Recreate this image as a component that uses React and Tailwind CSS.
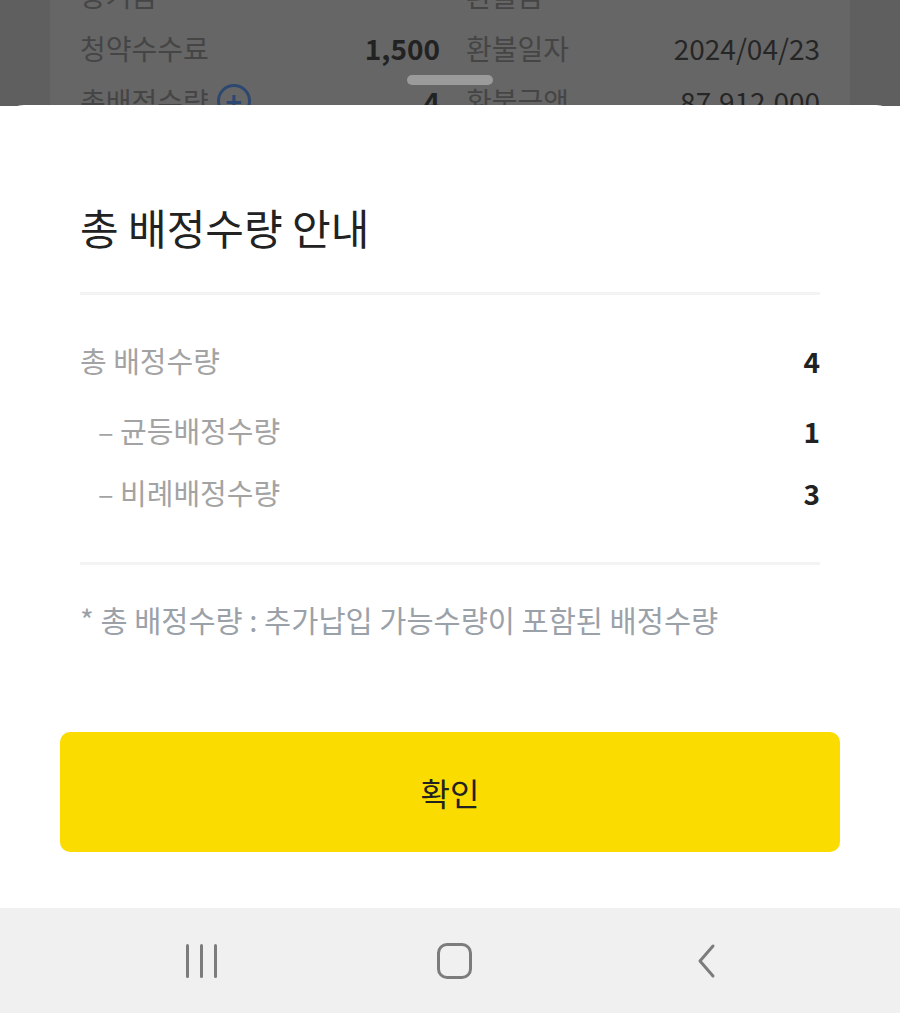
import React from 'react';

const FONT = { fontFamily: '"Noto Sans CJK KR", "Noto Sans", sans-serif' };

const BgRow = ({ label, value, label2, value2, plus }) => (
    <div className="flex items-center h-[53px]">
        <div className="flex items-center w-[360px] justify-between">
            <span className="flex items-center gap-2 text-[28px] text-[#454545]">
                {label}
                {plus && (
                    <span className="w-[34px] h-[34px] rounded-full border-[3px] border-[#2c4870] flex items-center justify-center text-[#2c4870] text-[28px] leading-none font-bold">+</span>
                )}
            </span>
            <span className="text-[28px] font-bold text-[#222]">{value}</span>
        </div>
        <span className="ml-[26px] text-[28px] text-[#454545]">{label2}</span>
        <span className="ml-auto text-[28px] text-[#262626]">{value2}</span>
    </div>
);

const InfoRow = ({ label, value, sub }) => (
    <div className="flex items-center justify-between h-[40px]">
        <span className={`text-[29px] text-[#a3a3a3] ${sub ? 'pl-[18px]' : ''}`}>{label}</span>
        <span className="text-[28px] font-bold text-[#222]">{value}</span>
    </div>
);

export default function App() {
    return (
        <div className="w-[900px] h-[1013px] flex flex-col bg-white overflow-hidden" style={FONT}>
            {/* dimmed page behind the sheet */}
            <div className="relative h-[106px] shrink-0 bg-[#5f5f5f] overflow-hidden">
                <div className="mx-[50px] h-[160px] bg-[#666666] px-[30px] -mt-[32px]">
                    <BgRow label="증거금" value="" label2="환불금" value2="" />
                    <BgRow label="청약수수료" value="1,500" label2="환불일자" value2="2024/04/23" />
                    <BgRow label="총배정수량" value="4" label2="환불금액" value2="87,912,000" plus />
                </div>
                <div className="absolute left-[407px] top-[75px] w-[86px] h-[10px] rounded-full bg-[#9b9b9b]" />
            </div>

            {/* bottom sheet */}
            <div className="-mt-px flex-1 bg-white rounded-t-[24px] flex flex-col relative">
                <div className="px-[80px] pt-[98px]">
                    <h1 className="text-[42px] leading-[48px] text-[#222] font-normal">총 배정수량 안내</h1>
                    <div className="mt-[41px] h-[3px] bg-[#f3f3f3]" />
                    <div className="mt-[46px]">
                        <InfoRow label="총 배정수량" value="4" />
                    </div>
                    <div className="mt-[30px]">
                        <InfoRow label="– 균등배정수량" value="1" sub />
                    </div>
                    <div className="mt-[22px]">
                        <InfoRow label="– 비례배정수량" value="3" sub />
                    </div>
                    <div className="mt-[49px] h-[3px] bg-[#f3f3f3]" />
                    <p className="mt-[34px] h-[40px] leading-[40px] text-[29.5px] text-[#9ba1a9]">
                        * 총 배정수량 : 추가납입 가능수량이 포함된 배정수량
                    </p>
                </div>
                <div className="px-[60px] mt-[93px]">
                    <button className="w-full h-[120px] rounded-[10px] bg-[#fadc00] text-[32px] text-[#222] font-normal">
                        확인
                    </button>
                </div>
            </div>

            {/* android nav bar */}
            <div className="h-[105px] shrink-0 bg-[#f0f0f0] flex items-center justify-center">
                <div className="w-[900px] flex items-center h-full">
                    <div className="absolute left-[186px] flex gap-[11px]">
                        <span className="w-[3px] h-[34px] rounded-full bg-[#7c7c7c]" />
                        <span className="w-[3px] h-[34px] rounded-full bg-[#7c7c7c]" />
                        <span className="w-[3px] h-[34px] rounded-full bg-[#7c7c7c]" />
                    </div>
                    <div className="absolute left-[437px] w-[35px] h-[36px] rounded-[10px] border-[3px] border-[#7c7c7c]" />
                    <svg className="absolute left-[692px]" width="28" height="40" viewBox="0 0 28 40">
                        <path d="M21 5 L8 20 L21 35" fill="none" stroke="#7c7c7c" strokeWidth="3" strokeLinecap="round" strokeLinejoin="round" />
                    </svg>
                </div>
            </div>
        </div>
    );
}
